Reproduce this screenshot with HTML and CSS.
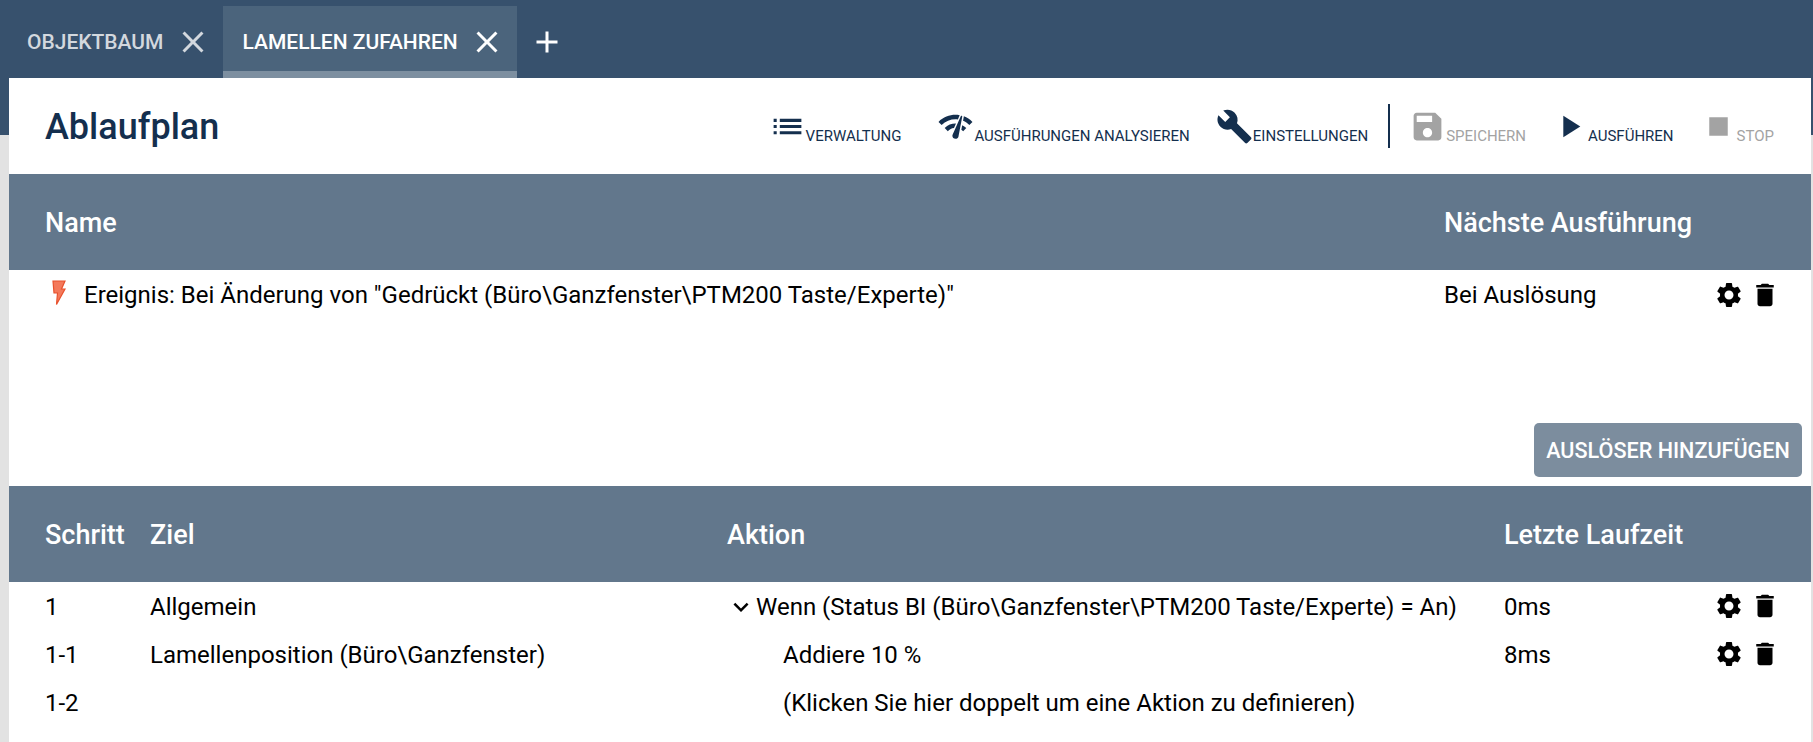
FILE: index.html
```html
<!DOCTYPE html>
<html lang="en">
  <head>
    <meta charset="UTF-8" />
    <title>Ablaufplan</title>
    <link rel="stylesheet" href="styles.css">
  </head>
  <body>
    <svg class="defs" width="0" height="0">
      <symbol id="i-close" viewBox="0 0 24 24"><path d="M19 6.41L17.59 5 12 10.59 6.41 5 5 6.41 10.59 12 5 17.59 6.41 19 12 13.41 17.59 19 19 17.59 13.41 12z"/></symbol>
      <symbol id="i-add" viewBox="0 0 24 24"><path d="M19 13h-6v6h-2v-6H5v-2h6V5h2v6h6v2z"/></symbol>
      <symbol id="i-list" viewBox="0 0 24 24"><path d="M3 13h2v-2H3v2zm0 4h2v-2H3v2zm0-8h2V7H3v2zm4 4h14v-2H7v2zm0 4h14v-2H7v2zM7 7v2h14V7H7z"/></symbol>
      <symbol id="i-network" viewBox="0 0 24 24"><path d="M15.9 5c-.17 0-.32.09-.41.23l-.07.15-5.18 11.65c-.16.29-.26.61-.26.96 0 1.11.9 2.01 2.01 2.01.96 0 1.77-.68 1.96-1.59l.01-.03L16.4 5.5c0-.28-.22-.5-.5-.5zM1 9l2 2c2.88-2.88 6.79-4.08 10.53-3.62l1.19-2.68C9.89 3.84 4.74 5.27 1 9zm20 2l2-2c-1.64-1.64-3.54-2.82-5.57-3.57l-.53 2.82c1.5.62 2.9 1.53 4.1 2.75zm-4 4l2-2c-.8-.8-1.7-1.42-2.66-1.89l-.55 2.92c.42.27.83.59 1.21.97zM5 13l2 2c1.13-1.13 2.56-1.79 4.03-2l1.28-2.88c-2.63-.08-5.3.87-7.31 2.88z"/></symbol>
      <symbol id="i-build" viewBox="0 0 24 24"><path d="M22.7 19l-9.1-9.1c.9-2.3.4-5-1.5-6.9-2-2-5-2.4-7.4-1.3L9 6 6 9 1.6 4.7C.4 7.1.9 10.1 2.9 12.1c1.9 1.9 4.6 2.4 6.9 1.5l9.1 9.1c.4.4 1 .4 1.4 0l2.3-2.3c.5-.4.5-1.1.1-1.4z"/></symbol>
      <symbol id="i-save" viewBox="0 0 24 24"><path d="M17 3H5c-1.11 0-2 .9-2 2v14c0 1.1.89 2 2 2h14c1.1 0 2-.9 2-2V7l-4-4zm-5 16c-1.66 0-3-1.34-3-3s1.34-3 3-3 3 1.34 3 3-1.34 3-3 3zm3-10H5V5h10v4z"/></symbol>
      <symbol id="i-play" viewBox="0 0 24 24"><path d="M8 5v14l11-7z"/></symbol>
      <symbol id="i-stop" viewBox="0 0 24 24"><path d="M6 6h12v12H6z"/></symbol>
      <symbol id="i-settings" viewBox="0 0 24 24"><path d="M19.14 12.94c.04-.3.06-.61.06-.94 0-.32-.02-.64-.07-.94l2.03-1.58c.18-.14.23-.41.12-.61l-1.92-3.32c-.12-.22-.37-.29-.59-.22l-2.39.96c-.5-.38-1.03-.7-1.62-.94l-.36-2.54c-.04-.24-.24-.41-.48-.41h-3.84c-.24 0-.43.17-.47.41l-.36 2.54c-.59.24-1.13.57-1.62.94l-2.39-.96c-.22-.08-.47 0-.59.22L2.74 8.87c-.12.21-.08.47.12.61l2.03 1.58c-.05.3-.09.63-.09.94s.02.64.07.94l-2.03 1.58c-.18.14-.23.41-.12.61l1.92 3.32c.12.22.37.29.59.22l2.39-.96c.5.38 1.03.7 1.62.94l.36 2.54c.05.24.24.41.48.41h3.84c.24 0 .44-.17.47-.41l.36-2.54c.59-.24 1.13-.56 1.62-.94l2.39.96c.22.08.47 0 .59-.22l1.92-3.32c.12-.22.07-.47-.12-.61l-2.01-1.58zM12 15.6c-1.98 0-3.6-1.62-3.6-3.6s1.62-3.6 3.6-3.6 3.6 1.62 3.6 3.6-1.62 3.6-3.6 3.6z"/></symbol>
      <symbol id="i-delete" viewBox="0 0 24 24"><path d="M6 19c0 1.1.9 2 2 2h8c1.1 0 2-.9 2-2V7H6v12zM19 4h-3.5l-1-1h-5l-1 1H5v2h14V4z"/></symbol>
      <symbol id="i-expand" viewBox="0 0 24 24"><path d="M16.59 8.59L12 13.17 7.41 8.59 6 10l6 6 6-6z"/></symbol>
    </svg>

    <nav class="tabs">
      <div class="tab">
        <span>OBJEKTBAUM</span>
        <svg class="tab-icon"><use href="#i-close"/></svg>
      </div>
      <div class="tab tab-active">
        <span>LAMELLEN ZUFAHREN</span>
        <svg class="tab-icon"><use href="#i-close"/></svg>
      </div>
      <svg class="tab-add"><use href="#i-add"/></svg>
    </nav>

    <main class="content">
      <div class="toolbar">
        <h1>Ablaufplan</h1>
        <div class="actions">
          <div class="action"><svg><use href="#i-list"/></svg><span>VERWALTUNG</span></div>
          <div class="action action-network"><svg><use href="#i-network"/></svg><span>AUSFÜHRUNGEN ANALYSIEREN</span></div>
          <div class="action action-build"><svg><use href="#i-build"/></svg><span>EINSTELLUNGEN</span></div>
          <div class="separator"></div>
          <div class="action disabled"><svg><use href="#i-save"/></svg><span>SPEICHERN</span></div>
          <div class="action action-play"><svg><use href="#i-play"/></svg><span>AUSFÜHREN</span></div>
          <div class="action action-stop disabled"><svg><use href="#i-stop"/></svg><span>STOP</span></div>
        </div>
      </div>

      <div class="grid-trigger head-row">
        <div class="col-first">Name</div>
        <div>Nächste Ausführung</div>
      </div>
      <div class="grid-trigger body-row">
        <div class="col-first trigger-name">
          <svg class="bolt" viewBox="0 0 14 26">
            <path d="M1 1h12l-3.5 8H13L4.5 24.5 5.5 13H2z" fill="#f4795b" stroke="#e8512d" stroke-width="1.2"/>
          </svg>
          <span>Ereignis: Bei Änderung von "Gedrückt (Büro\Ganzfenster\PTM200 Taste/Experte)"</span>
        </div>
        <div>Bei Auslösung</div>
        <div class="row-icons">
          <svg><use href="#i-settings"/></svg>
          <svg><use href="#i-delete"/></svg>
        </div>
      </div>

      <div class="trigger-foot">
        <button class="add-btn">AUSLÖSER HINZUFÜGEN</button>
      </div>

      <div class="grid-steps head-row">
        <div class="col-first">Schritt</div>
        <div>Ziel</div>
        <div>Aktion</div>
        <div>Letzte Laufzeit</div>
      </div>
      <div class="grid-steps body-row">
        <div class="col-first">1</div>
        <div>Allgemein</div>
        <div class="action-cell">
          <svg class="chevron"><use href="#i-expand"/></svg>
          <span>Wenn (Status BI (Büro\Ganzfenster\PTM200 Taste/Experte) = An)</span>
        </div>
        <div>0ms</div>
        <div class="row-icons">
          <svg><use href="#i-settings"/></svg>
          <svg><use href="#i-delete"/></svg>
        </div>
      </div>
      <div class="grid-steps body-row">
        <div class="col-first">1-1</div>
        <div>Lamellenposition (Büro\Ganzfenster)</div>
        <div class="action-indent">Addiere 10 %</div>
        <div>8ms</div>
        <div class="row-icons">
          <svg><use href="#i-settings"/></svg>
          <svg><use href="#i-delete"/></svg>
        </div>
      </div>
      <div class="grid-steps body-row">
        <div class="col-first">1-2</div>
        <div></div>
        <div class="action-indent">(Klicken Sie hier doppelt um eine Aktion zu definieren)</div>
        <div></div>
      </div>
    </main>
  </body>
</html>
```

FILE: styles.css
```css
* {
  box-sizing: border-box;
}
html,
body {
  height: 100%;
}
body {
  margin: 0;
  padding: 0 2px 0 9px;
  font-family: Roboto, sans-serif;
  color: #000;
  background: linear-gradient(#37516d 135px, #e2e2e2 135px);
  overflow: hidden;
}
.defs {
  position: absolute;
}

/* tabs */
.tabs {
  display: flex;
  align-items: flex-end;
  height: 78px;
  margin-left: -9px;
}
.tab {
  display: flex;
  align-items: center;
  height: 72px;
  padding: 0 12px 0 27px;
  font-size: 21px;
  font-weight: 500;
  color: #d3d8de;
}
.tab-active {
  padding: 7px 12px 0 19px;
  color: #fff;
  background: #4b647c;
  border-bottom: 7px solid #7d8fa0;
}
.tab-active .tab-icon {
  margin-left: 11px;
}
.tab-icon {
  width: 36px;
  height: 36px;
  margin-left: 12px;
  fill: currentColor;
}
.tab-add {
  width: 36px;
  height: 36px;
  margin: 0 0 18px 12px;
  fill: #fff;
}

/* content */
.content {
  height: calc(100% - 78px);
  background: #fff;
}
.toolbar {
  display: flex;
  justify-content: space-between;
  align-items: center;
  height: 96px;
  padding-left: 36px;
}
h1 {
  margin: 2px 0 0;
  font-size: 36px;
  font-weight: 500;
  color: #142f4e;
}
.actions {
  display: flex;
  align-items: center;
  height: 100%;
  padding-right: 37px;
}
.action {
  display: flex;
  align-items: flex-end;
  font-size: 15px;
  color: #142f4e;
  fill: #142f4e;
}
.action span {
  line-height: 18px;
}
.action svg {
  width: 37px;
  height: 37px;
}
.disabled {
  color: #a3a3a3;
  fill: #a3a3a3;
}
.action-network {
  margin-left: 36px;
}
.action-build {
  margin-left: 26px;
}
.action-play {
  margin-left: 25px;
}
.action-stop {
  margin-left: 26px;
}
.separator {
  width: 2px;
  height: 44px;
  margin: 0 19px 0 20px;
  background: #142f4e;
}

/* tables */
.grid-trigger,
.grid-steps {
  display: grid;
  align-items: center;
}
.grid-trigger {
  grid-template-columns: 1435px 270px 1fr;
}
.grid-steps {
  grid-template-columns: 141px 577px 777px 210px 1fr;
}
.col-first {
  padding-left: 36px;
}
.head-row {
  height: 96px;
  padding-top: 2px;
  font-size: 27px;
  font-weight: 500;
  color: #fff;
  background: #62778c;
}
.body-row {
  min-height: 48px;
  padding-top: 2px;
  font-size: 24px;
}
.grid-trigger.body-row {
  min-height: 50px;
  padding-top: 0;
}
.trigger-name {
  display: flex;
  align-items: center;
}
.bolt {
  width: 14px;
  height: 26px;
  margin: -4px 18px 0 7px;
}
.row-icons {
  display: flex;
  gap: 6px;
  fill: #000;
}
.row-icons svg {
  width: 30px;
  height: 30px;
}
.grid-steps .row-icons {
  margin-top: -2px;
}
.trigger-foot {
  display: flex;
  justify-content: flex-end;
  align-items: flex-end;
  height: 166px;
  padding: 0 9px 9px 0;
}
.add-btn {
  width: 268px;
  height: 54px;
  padding: 0;
  border: none;
  border-radius: 5px;
  font-family: Roboto, sans-serif;
  font-size: 21.6px;
  font-weight: 500;
  color: #fff;
  background: #7c8d9e;
}
.action-cell {
  display: flex;
  align-items: center;
  margin-left: -1px;
}
.chevron {
  width: 30px;
  height: 30px;
}
.action-indent {
  padding-left: 56px;
}
```
